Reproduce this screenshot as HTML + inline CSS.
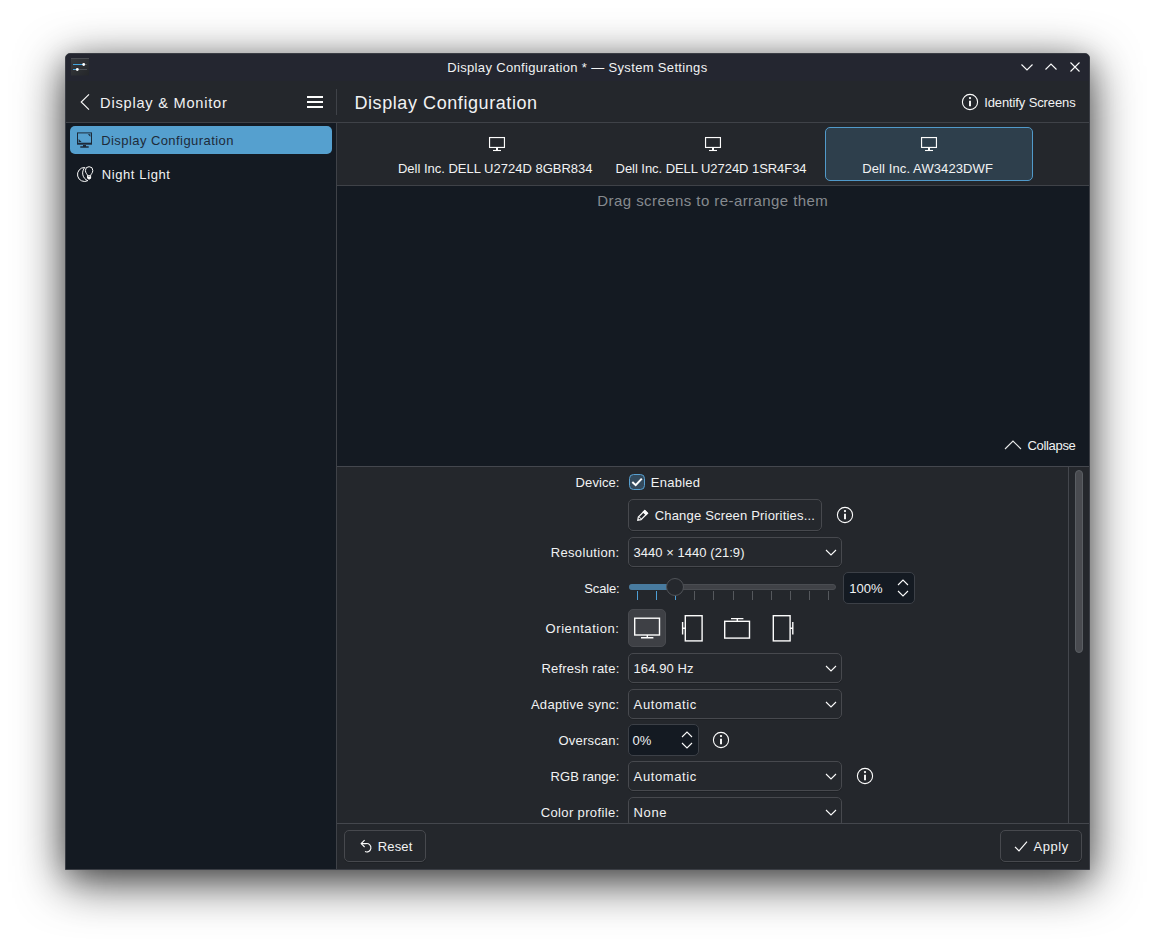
<!DOCTYPE html>
<html lang="en"><head><meta charset="utf-8"><title>Display Configuration — System Settings</title>
<style>
html,body{margin:0;padding:0;background:#ffffff;}
body{width:1155px;height:947px;position:relative;overflow:hidden;font-family:"Liberation Sans",sans-serif;}
.a{position:absolute;box-sizing:border-box;}
.t{position:absolute;white-space:pre;line-height:20px;font-family:"Liberation Sans",sans-serif;}
svg{position:absolute;overflow:visible;}
.win{left:65px;top:53px;width:1025px;height:817px;background:#24272c;border-radius:5px 5px 0 0;
 box-shadow:0 12px 48px rgba(0,0,0,0.75),0 6px 24px rgba(0,0,0,0.18);border:1px solid #3a3d44;}
.view{background:#141a22;}
.sep{background:#3f4248;}
.btn{border:1px solid #47494e;border-radius:5px;background:#25282d;box-shadow:0 1px 0 rgba(0,0,0,0.14);}
.combo{border:1px solid #47494e;border-radius:5px;background:#25282d;box-shadow:0 1px 0 rgba(0,0,0,0.14);}
.spin{border:1px solid #3c4047;border-radius:5px;background:#141a22;}

</style></head>
<body>
<div class="a win"></div>
<div class="a" style="left:66px;top:54px;width:1023px;height:27px;background:#242630;border-radius:4px 4px 0 0"></div>
<!-- sidebar -->
<div class="a view" style="left:66px;top:123px;width:270px;height:746px"></div>
<div class="a sep" style="left:66px;top:122px;width:1023px;height:1px"></div>
<div class="a sep" style="left:336px;top:89px;width:1px;height:26px"></div>
<div class="a sep" style="left:336px;top:123px;width:1px;height:746px"></div>
<!-- app icon -->
<svg style="left:71px;top:58px" width="18" height="18" viewBox="0 0 18 18">
 <defs><linearGradient id="gi" x1="0" y1="0" x2="1" y2="1"><stop offset="0" stop-color="#383b3f"/><stop offset="1" stop-color="#242629"/></linearGradient></defs>
 <rect x="0" y="0" width="18" height="17.5" fill="url(#gi)"/>
 <rect x="0" y="0" width="18" height="1" fill="#4a4d52"/>
 <rect x="2" y="6" width="14" height="1" fill="#4c5056"/>
 <rect x="2" y="11" width="14" height="1" fill="#4c5056"/>
 <rect x="2" y="6" width="10" height="1" fill="#41a4de"/>
 <rect x="2" y="11" width="4" height="1" fill="#41a4de"/>
 <circle cx="12.7" cy="6.5" r="1.4" fill="#fff"/>
 <circle cx="6.3" cy="11.5" r="1.4" fill="#fff"/>
</svg>
<!-- window controls -->
<svg style="left:1016px;top:56px" width="70" height="24" viewBox="1016 56 70 24" fill="none" stroke="#fcfcfc" stroke-width="1.1">
 <path d="M1021.5 64.5 L1027 70 L1032.5 64.5"/>
 <path d="M1045.5 69.5 L1051 64 L1056.5 69.5"/>
 <path d="M1070.5 62.5 L1079.5 71.5 M1079.5 62.5 L1070.5 71.5"/>
</svg>
<!-- back chevron + hamburger -->
<svg style="left:78px;top:92px" width="14" height="20" viewBox="78 92 14 20" fill="none" stroke="#fcfcfc" stroke-width="1.1">
 <path d="M89 94.3 L81.2 102 L89 109.7"/>
</svg>
<div class="a" style="left:307px;top:96px;width:16px;height:2px;background:#fcfcfc"></div>
<div class="a" style="left:307px;top:101px;width:16px;height:2px;background:#fcfcfc"></div>
<div class="a" style="left:307px;top:106px;width:16px;height:2px;background:#fcfcfc"></div>
<!-- identify screens icon -->
<svg style="left:961px;top:93px" width="18" height="18" viewBox="0 0 18 18" fill="none" stroke="#fcfcfc" stroke-width="1.1">
 <circle cx="9" cy="9" r="7.6"/><path d="M9 7.7 V13.3" stroke-width="1.9"/><circle cx="9" cy="5.1" r="1.15" fill="#fcfcfc" stroke="none"/>
</svg>
<!-- sidebar items -->
<div class="a" style="left:70px;top:126px;width:262px;height:28px;border-radius:5px;background:#55a0cf"></div>
<svg style="left:77px;top:132px" width="16" height="16" viewBox="0 0 16 16" fill="none" stroke="#1d2b3a" stroke-width="1">
 <rect x="0.5" y="0.9" width="14" height="11" />
 <path d="M0 11.6 H15" stroke-width="1.8"/>
 <path d="M6 13.6 H9 M3.3 15 H11.7" stroke-width="1.3"/>
 <path d="M10.8 2.2 L13.4 2.2 L13.4 4.8 Z M1.6 10 L4.6 10 L1.6 7 Z" fill="#1d2b3a" stroke="none"/>
</svg>
<svg style="left:77px;top:166px" width="16" height="16" viewBox="0 0 16 16" fill="none" stroke="#fcfcfc" stroke-width="1">
 <path d="M7.8 1.5 A7 7 0 1 0 10.8 14.67 A8.2 8.2 0 0 1 7.8 1.5 Z"/>
 <path d="M10.6 9.7 C10.6 8.3 8.4 7.3 8.4 4.4 A3.7 3.7 0 0 1 15.8 4.4 C15.8 7.3 13.6 8.3 13.6 9.7 Z"/>
 <path d="M10.6 9.7 V11.4 A1.5 1.5 0 0 0 13.6 11.4 V9.7"/>
 <path d="M10.6 11 H13.6 V11.4 A1.5 1.5 0 0 1 10.6 11.4 Z" fill="#fcfcfc"/>
</svg>
<!-- tab bar -->
<div class="a sep" style="left:337px;top:185px;width:752px;height:1px"></div>
<div class="a" style="left:825px;top:127px;width:208px;height:54px;border-radius:5px;border:1px solid #519aca;background:#2e3f4c"></div>
<svg style="left:489px;top:137px" width="16" height="14" viewBox="0 0 16 14" fill="none" stroke="#fcfcfc" stroke-width="1"><rect x="0.55" y="0.55" width="14.9" height="9.9" stroke-width="1.15"/><path d="M8 11 V13.2" stroke-width="2"/><path d="M4 13.5 H12" stroke-width="1.1"/></svg>
<svg style="left:705px;top:137px" width="16" height="14" viewBox="0 0 16 14" fill="none" stroke="#fcfcfc" stroke-width="1"><rect x="0.55" y="0.55" width="14.9" height="9.9" stroke-width="1.15"/><path d="M8 11 V13.2" stroke-width="2"/><path d="M4 13.5 H12" stroke-width="1.1"/></svg>
<svg style="left:921px;top:137px" width="16" height="14" viewBox="0 0 16 14" fill="none" stroke="#fcfcfc" stroke-width="1"><rect x="0.55" y="0.55" width="14.9" height="9.9" stroke-width="1.15"/><path d="M8 11 V13.2" stroke-width="2"/><path d="M4 13.5 H12" stroke-width="1.1"/></svg>
<!-- screen arrangement view -->
<div class="a view" style="left:337px;top:186px;width:752px;height:280px"></div>
<svg style="left:1003px;top:438px" width="20" height="14" viewBox="1003 438 20 14" fill="none" stroke="#e8e9ea" stroke-width="1.1"><path d="M1005 449 L1013 441 L1021 449"/></svg>
<div class="a sep" style="left:337px;top:466px;width:752px;height:1px;background:#44474e"></div>
<!-- scroll area -->
<div class="a" style="left:1068px;top:467px;width:1px;height:356px;background:#44474d"></div>
<div class="a" style="left:1075px;top:470px;width:8px;height:183px;border-radius:4px;background:#494b50;border:1px solid #5a5e63"></div>
<!-- form -->
<div class="a" style="left:629px;top:474px;width:16px;height:16px;border-radius:4.5px;border:1px solid #579fd0;background:#334a5d"></div>
<svg style="left:629px;top:474px" width="16" height="16" viewBox="0 0 16 16" fill="none" stroke="#fcfcfc" stroke-width="2"><path d="M3.3 8 L6.7 11.2 L12.8 4.6"/></svg>
<div class="a btn" style="left:628px;top:499px;width:194px;height:32px"></div>
<svg style="left:637px;top:509px" width="12" height="12" viewBox="0 0 12 12" fill="none" stroke="#fcfcfc" stroke-width="1.2"><path d="M0.8 11.2 L1.3 8 L7.8 1.5 L10.5 4.2 L4 10.7 Z"/><path d="M6.3 3 L9 5.7 L10.5 4.2 L7.8 1.5 Z" fill="#fcfcfc"/><path d="M1.9 7.6 L4.4 10.1" stroke-width="1"/></svg>
<svg style="left:836px;top:506px" width="18" height="18" viewBox="0 0 18 18" fill="none" stroke="#fcfcfc" stroke-width="1.1"><circle cx="9" cy="9" r="7.6"/><path d="M9 7.7 V13.3" stroke-width="1.9"/><circle cx="9" cy="5.1" r="1.15" fill="#fcfcfc" stroke="none"/></svg>
<div class="a combo" style="left:628px;top:537px;width:214px;height:30px"></div>
<svg style="left:824px;top:547px" width="14" height="10" viewBox="824 547 14 10" fill="none" stroke="#fcfcfc" stroke-width="1.1"><path d="M826 550 L831 555 L836 550"/></svg>
<!-- slider -->
<div class="a" style="left:629px;top:584px;width:207px;height:6px;border-radius:3px;background:#404247;border:1px solid #4a4d52"></div>
<div class="a" style="left:629px;top:584px;width:46px;height:6px;border-radius:3px 0 0 3px;background:#487b9f"></div>
<div class="a" id="ticks"></div>
<div class="a" style="left:637px;top:591px;width:1px;height:9px;background:#4d9fd6"></div>
<div class="a" style="left:656px;top:591px;width:1px;height:9px;background:#4d9fd6"></div>
<div class="a" style="left:675px;top:591px;width:1px;height:9px;background:#4d9fd6"></div>
<div class="a" style="left:694px;top:591px;width:1px;height:9px;background:#55585d"></div>
<div class="a" style="left:713px;top:591px;width:1px;height:9px;background:#55585d"></div>
<div class="a" style="left:733px;top:591px;width:1px;height:9px;background:#55585d"></div>
<div class="a" style="left:752px;top:591px;width:1px;height:9px;background:#55585d"></div>
<div class="a" style="left:771px;top:591px;width:1px;height:9px;background:#55585d"></div>
<div class="a" style="left:790px;top:591px;width:1px;height:9px;background:#55585d"></div>
<div class="a" style="left:809px;top:591px;width:1px;height:9px;background:#55585d"></div>
<div class="a" style="left:828px;top:591px;width:1px;height:9px;background:#55585d"></div>
<div class="a" style="left:666px;top:578px;width:18px;height:18px;border-radius:9px;background:#25282d;border:1px solid #505358"></div>
<div class="a spin" style="left:843px;top:572px;width:72px;height:32px"></div>
<svg style="left:896px;top:578px" width="14" height="20" viewBox="896 578 14 20" fill="none" stroke="#fcfcfc" stroke-width="1.1"><path d="M898 585 L903 580 L908 585 M898 591 L903 596 L908 591"/></svg>
<!-- orientation -->
<div class="a" style="left:628px;top:609px;width:38px;height:38px;border-radius:5px;background:#3e4045;border:1px solid #484a4f"></div>
<svg style="left:628px;top:609px" width="180" height="38" viewBox="628 609 180 38" fill="none" stroke="#fcfcfc" stroke-width="1.4">
 <rect x="634.7" y="618.2" width="24.8" height="16.8"/><path d="M647.3 635 V637.7 M641 637.7 H653.4"/>
 <rect x="685.3" y="615.7" width="16.8" height="25.2"/><path d="M685.3 628.3 H682.6 M682.6 622 V634.4"/>
 <rect x="724.7" y="621.3" width="24.8" height="16.8"/><path d="M737.3 621.3 V618.6 M731 618.6 H743.4"/>
 <rect x="773.3" y="615.7" width="16.8" height="25.2"/><path d="M790.1 628.3 H792.8 M792.8 622 V634.4"/>
</svg>
<div class="a combo" style="left:628px;top:653px;width:214px;height:30px"></div>
<svg style="left:824px;top:663px" width="14" height="10" viewBox="824 547 14 10" fill="none" stroke="#fcfcfc" stroke-width="1.1"><path d="M826 550 L831 555 L836 550"/></svg>
<div class="a combo" style="left:628px;top:689px;width:214px;height:30px"></div>
<svg style="left:824px;top:699px" width="14" height="10" viewBox="824 547 14 10" fill="none" stroke="#fcfcfc" stroke-width="1.1"><path d="M826 550 L831 555 L836 550"/></svg>
<div class="a spin" style="left:628px;top:724px;width:71px;height:32px"></div>
<svg style="left:680px;top:730px" width="14" height="20" viewBox="896 578 14 20" fill="none" stroke="#fcfcfc" stroke-width="1.1"><path d="M898 585 L903 580 L908 585 M898 591 L903 596 L908 591"/></svg>
<svg style="left:712px;top:731px" width="18" height="18" viewBox="0 0 18 18" fill="none" stroke="#fcfcfc" stroke-width="1.1"><circle cx="9" cy="9" r="7.6"/><path d="M9 7.7 V13.3" stroke-width="1.9"/><circle cx="9" cy="5.1" r="1.15" fill="#fcfcfc" stroke="none"/></svg>
<div class="a combo" style="left:628px;top:761px;width:214px;height:30px"></div>
<svg style="left:824px;top:771px" width="14" height="10" viewBox="824 547 14 10" fill="none" stroke="#fcfcfc" stroke-width="1.1"><path d="M826 550 L831 555 L836 550"/></svg>
<svg style="left:856px;top:767px" width="18" height="18" viewBox="0 0 18 18" fill="none" stroke="#fcfcfc" stroke-width="1.1"><circle cx="9" cy="9" r="7.6"/><path d="M9 7.7 V13.3" stroke-width="1.9"/><circle cx="9" cy="5.1" r="1.15" fill="#fcfcfc" stroke="none"/></svg>
<div class="a" style="left:628px;top:797px;width:214px;height:26px;overflow:hidden"><div class="a combo" style="left:0;top:0;width:214px;height:30px"></div></div>
<svg style="left:824px;top:807px" width="14" height="10" viewBox="824 547 14 10" fill="none" stroke="#fcfcfc" stroke-width="1.1"><path d="M826 550 L831 555 L836 550"/></svg>
<!-- footer -->
<div class="a sep" style="left:337px;top:823px;width:752px;height:1px;background:#44474d"></div>
<div class="a btn" style="left:344px;top:830px;width:82px;height:32px"></div>
<svg style="left:360px;top:839px" width="12" height="14" viewBox="0 0 12 14" fill="none" stroke="#fcfcfc" stroke-width="1.1"><path d="M1.2 4.6 H6.3 A4.2 4.2 0 1 1 5 12.6"/><path d="M4.6 1.2 L1.2 4.6 L4.6 8"/></svg>
<div class="a btn" style="left:1000px;top:830px;width:82px;height:32px"></div>
<svg style="left:1013px;top:839px" width="16" height="14" viewBox="1013 839 16 14" fill="none" stroke="#fcfcfc" stroke-width="1.2"><path d="M1015 846.8 L1019 850.8 L1027 841.6"/></svg>

<!-- text layer -->
<span class="t" style="left:447.22px;top:57.50px;font-size:13px;letter-spacing:0.339px;color:#f1f2f3">Display Configuration * — System Settings</span>
<span class="t" style="left:100.12px;top:92.94px;font-size:14.6px;letter-spacing:0.771px;color:#f1f2f3">Display &amp; Monitor</span>
<span class="t" style="left:354.42px;top:92.76px;font-size:18px;letter-spacing:0.581px;color:#f1f2f3">Display Configuration</span>
<span class="t" style="left:984.22px;top:92.50px;font-size:13px;letter-spacing:-0.120px;color:#f1f2f3">Identify Screens</span>
<span class="t" style="left:101.22px;top:130.50px;font-size:13px;letter-spacing:0.430px;color:#1d2b3a">Display Configuration</span>
<span class="t" style="left:101.72px;top:164.50px;font-size:13px;letter-spacing:0.604px;color:#f1f2f3">Night Light</span>
<span class="t" style="left:397.92px;top:158.50px;font-size:13px;letter-spacing:-0.001px;color:#f1f2f3">Dell Inc. DELL U2724D 8GBR834</span>
<span class="t" style="left:615.62px;top:158.50px;font-size:13px;letter-spacing:-0.054px;color:#f1f2f3">Dell Inc. DELL U2724D 1SR4F34</span>
<span class="t" style="left:862.22px;top:158.50px;font-size:13px;letter-spacing:0.103px;color:#f1f2f3">Dell Inc. AW3423DWF</span>
<span class="t" style="left:597.30px;top:190.80px;font-size:15px;letter-spacing:0.432px;color:#868a8f">Drag screens to re-arrange them</span>
<span class="t" style="left:1027.52px;top:435.50px;font-size:13px;letter-spacing:-0.324px;color:#f1f2f3">Collapse</span>
<span class="t" style="left:575.62px;top:472.50px;font-size:13px;letter-spacing:0.077px;color:#f1f2f3">Device:</span>
<span class="t" style="left:650.82px;top:472.50px;font-size:13px;letter-spacing:0.240px;color:#f1f2f3">Enabled</span>
<span class="t" style="left:654.72px;top:505.50px;font-size:13px;letter-spacing:0.183px;color:#f1f2f3">Change Screen Priorities...</span>
<span class="t" style="left:550.72px;top:542.50px;font-size:13px;letter-spacing:0.341px;color:#f1f2f3">Resolution:</span>
<span class="t" style="left:633.52px;top:542.50px;font-size:13px;letter-spacing:0.043px;color:#f1f2f3">3440 × 1440 (21:9)</span>
<span class="t" style="left:584.32px;top:578.50px;font-size:13px;letter-spacing:-0.157px;color:#f1f2f3">Scale:</span>
<span class="t" style="left:849.22px;top:578.50px;font-size:13px;letter-spacing:0.013px;color:#f1f2f3">100%</span>
<span class="t" style="left:545.62px;top:618.50px;font-size:13px;letter-spacing:0.558px;color:#f1f2f3">Orientation:</span>
<span class="t" style="left:541.42px;top:658.50px;font-size:13px;letter-spacing:0.226px;color:#f1f2f3">Refresh rate:</span>
<span class="t" style="left:633.52px;top:658.50px;font-size:13px;letter-spacing:0.082px;color:#f1f2f3">164.90 Hz</span>
<span class="t" style="left:530.92px;top:694.50px;font-size:13px;letter-spacing:0.290px;color:#f1f2f3">Adaptive sync:</span>
<span class="t" style="left:633.62px;top:694.50px;font-size:13px;letter-spacing:0.599px;color:#f1f2f3">Automatic</span>
<span class="t" style="left:558.52px;top:730.50px;font-size:13px;letter-spacing:0.194px;color:#f1f2f3">Overscan:</span>
<span class="t" style="left:632.42px;top:730.50px;font-size:13px;letter-spacing:0.152px;color:#f1f2f3">0%</span>
<span class="t" style="left:550.62px;top:766.50px;font-size:13px;letter-spacing:0.024px;color:#f1f2f3">RGB range:</span>
<span class="t" style="left:633.62px;top:766.50px;font-size:13px;letter-spacing:0.599px;color:#f1f2f3">Automatic</span>
<span class="t" style="left:540.72px;top:802.50px;font-size:13px;letter-spacing:0.364px;color:#f1f2f3">Color profile:</span>
<span class="t" style="left:633.62px;top:802.50px;font-size:13px;letter-spacing:0.605px;color:#f1f2f3">None</span>
<span class="t" style="left:377.82px;top:836.50px;font-size:13px;letter-spacing:0.146px;color:#f1f2f3">Reset</span>
<span class="t" style="left:1033.42px;top:836.50px;font-size:13px;letter-spacing:0.554px;color:#f1f2f3">Apply</span>
</body></html>
